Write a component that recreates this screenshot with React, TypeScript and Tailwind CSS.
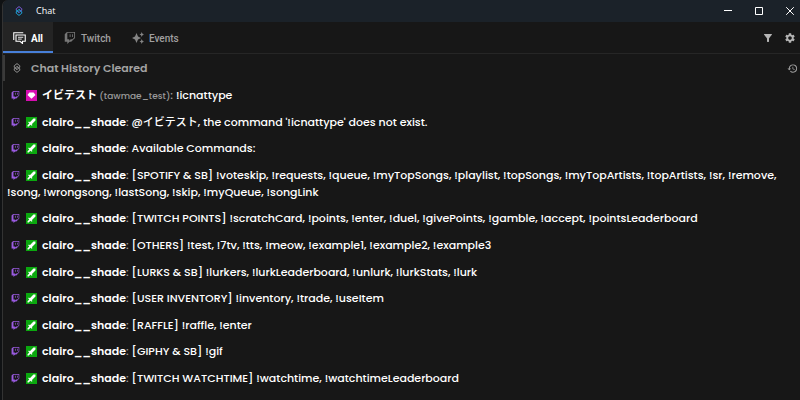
import type { ReactNode } from "react";
import { BsTwitch } from "react-icons/bs";
import { MdFilterAlt, MdHistory, MdSettings } from "react-icons/md";

type Message = {
  user: string;
  login?: string;
  badge: "sub" | "mod";
  text: string;
};

const messages: Message[] = [
  { user: "イビテスト", login: "tawmae_test", badge: "sub", text: "!icnattype" },
  { user: "clairo__shade", badge: "mod", text: "@イビテスト, the command '!icnattype' does not exist." },
  { user: "clairo__shade", badge: "mod", text: "Available Commands:" },
  {
    user: "clairo__shade",
    badge: "mod",
    text: "[SPOTIFY & SB] !voteskip, !requests, !queue, !myTopSongs, !playlist, !topSongs, !myTopArtists, !topArtists, !sr, !remove, !song, !wrongsong, !lastSong, !skip, !myQueue, !songLink",
  },
  {
    user: "clairo__shade",
    badge: "mod",
    text: "[TWITCH POINTS] !scratchCard, !points, !enter, !duel, !givePoints, !gamble, !accept, !pointsLeaderboard",
  },
  { user: "clairo__shade", badge: "mod", text: "[OTHERS] !test, !7tv, !tts, !meow, !example1, !example2, !example3" },
  { user: "clairo__shade", badge: "mod", text: "[LURKS & SB] !lurkers, !lurkLeaderboard, !unlurk, !lurkStats, !lurk" },
  { user: "clairo__shade", badge: "mod", text: "[USER INVENTORY] !inventory, !trade, !useItem" },
  { user: "clairo__shade", badge: "mod", text: "[RAFFLE] !raffle, !enter" },
  { user: "clairo__shade", badge: "mod", text: "[GIPHY & SB] !gif" },
  { user: "clairo__shade", badge: "mod", text: "[TWITCH WATCHTIME] !watchtime, !watchtimeLeaderboard" },
];

const Logo = ({ className, top, bottom }: { className: string; top: string; bottom: string }) => (
  <svg viewBox="0 0 16 20" className={className} fill="none" strokeWidth="2" strokeLinejoin="round" aria-hidden="true">
    <path d="M2.500 8.500V5.500L8 1.200l5.500 4.300v3L8 13 5 10.500" stroke={top} />
    <path d="M13.500 11.500v3L8 18.800l-5.500-4.300v-3L8 7l3 2.500" stroke={bottom} />
    <path d="M2.500 8.500L8 13M13.500 11.500L8 7" stroke={bottom} />
  </svg>
);

const ChatIcon = () => (
  <svg viewBox="0 0 26 24" className="h-3 w-[13px]" fill="none" stroke="currentColor" strokeWidth="2.2" aria-hidden="true">
    <path d="M1.500 16V1.500h19" />
    <path d="M6 6h18.500v12.500H19V23l-5-4.500H6z" />
    <path d="M10 10.500h10.500M10 14.200h7.500" strokeWidth="1.8" />
  </svg>
);

const SparklesIcon = () => (
  <svg viewBox="0 0 24 24" className="size-3 text-[#858585]" fill="currentColor" aria-hidden="true">
    <path d="M9 2l3 7 6 3-6 3-3 7-3-7-6-3 6-3z" />
    <path d="M19.500 0l1.500 3.500L24 5l-3 1.500L19.500 10 18 6.500 15 5l3-1.500z" />
    <path d="M19.500 14l1.500 3.500 3 1.500-3 1.500-1.500 3.500-1.500-3.500-3-1.500 3-1.500z" />
  </svg>
);

const Badge = ({ kind }: { kind: Message["badge"] }) =>
  kind === "sub" ? (
    <svg viewBox="0 0 18 18" className="mr-[5px] inline-block size-[11px] align-[-2px]" aria-hidden="true">
      <path d="M0 0h18v18H0z" fill="#d60db0" />
      <path d="M5.500 4h7l3 4L9 14.500 2.500 8z" fill="#fff" />
    </svg>
  ) : (
    <svg viewBox="0 0 18 18" className="mr-[5px] inline-block size-[11px] align-[-2px]" aria-hidden="true">
      <path d="M0 0h18v18H0z" fill="#0ba80f" />
      <path d="M15.500 2.500h-3.300L6.300 8.600 4.900 7.300 3.500 8.700l1.900 2-2.900 2.900v1.900h1.900l2.900-2.900 2 1.900 1.400-1.400-1.300-1.400 6.100-5.900z" fill="#fff" />
    </svg>
  );

const Tab = ({ icon, label, active }: { icon: ReactNode; label: string; active?: boolean }) => (
  <button
    type="button"
    role="tab"
    aria-selected={!!active}
    className={
      active
        ? "flex items-center gap-[5px] border-b-2 border-[#477fd9] bg-[#242424] px-2.5 pt-[3px] font-bold text-white"
        : "flex items-center gap-[5px] border-b-2 border-transparent px-2.5 pt-[3px] font-medium text-[#a0a0a0]"
    }
  >
    {icon}
    {label}
  </button>
);

const App = () => {
  return (
    <div className="flex min-h-screen bg-[#101214] font-['Poppins','Inter','Noto_Sans_CJK_JP',sans-serif] text-[11px] text-white">
      <div className="w-0.5 shrink-0"></div>

      <div className="flex min-w-0 flex-1 flex-col overflow-hidden rounded-tl-md border-l border-[#333333] bg-[#171717]">
        {/* Title bar */}
        <header className="flex h-[22px] items-center bg-[#1b2229] pr-1.5 pl-3">
          <Logo className="mr-[13px] h-2.5 w-2" top="#7c5bd6" bottom="#1fa3d8" />
          <h1 className="font-['Open_Sans',sans-serif] text-[9px]">Chat</h1>
          <div className="ml-auto flex items-center gap-[23px]">
            <button type="button" aria-label="Minimize">
              <svg viewBox="0 0 8 8" className="size-2" stroke="currentColor" aria-hidden="true">
                <path d="M0 3.500h8" />
              </svg>
            </button>
            <button type="button" aria-label="Maximize">
              <svg viewBox="0 0 8 8" className="size-2" fill="none" stroke="currentColor" aria-hidden="true">
                <path d="M.5.5h7v7h-7z" />
              </svg>
            </button>
            <button type="button" aria-label="Close">
              <svg viewBox="0 0 8 8" className="size-2" fill="none" stroke="currentColor" aria-hidden="true">
                <path d="M.2.2l7.600 7.600M7.800.2L.2 7.800" />
              </svg>
            </button>
          </div>
        </header>

        {/* Tabs */}
        <nav className="flex h-8 border-b border-[#262626]">
          <div role="tablist" className="flex gap-px font-['Roboto',sans-serif] text-[10px]">
            <Tab icon={<ChatIcon />} label="All" active />
            <Tab icon={<BsTwitch className="size-3 text-[#777777]" aria-hidden="true" />} label="Twitch" />
            <Tab icon={<SparklesIcon />} label="Events" />
          </div>
          <div className="ml-auto flex items-center gap-2.5 pr-1 text-[#b5b5b5]">
            <button type="button" aria-label="Filter">
              <MdFilterAlt className="size-3" />
            </button>
            <button type="button" aria-label="Settings">
              <MdSettings className="size-3" />
            </button>
          </div>
        </nav>

        <main className="flex flex-1 flex-col">
          <div className="mt-px flex h-[26px] items-center border-l-2 border-[#3a3a3a] pr-0.5 pl-2 text-[#a3a3a3]">
            <Logo className="mr-2.5 h-2.5 w-2" top="#8f8f8f" bottom="#8f8f8f" />
            <span className="font-semibold">Chat History Cleared</span>
            <button type="button" aria-label="History" className="ml-auto">
              <MdHistory className="size-[11px]" />
            </button>
          </div>

          {/* Messages */}
          <ul className="flex flex-1 flex-col justify-between pt-1.5 pr-2 pb-[13px] pl-1 leading-[17px] font-medium">
            {messages.map((message, index) => (
              <li key={index}>
                <BsTwitch className="mr-1.5 ml-1 inline-block size-[9px] align-[-1px] text-[#9a5be0]" aria-hidden="true" />
                <Badge kind={message.badge} />
                <b className="font-semibold">{message.user}</b>
                {message.login && <span className="text-[9px] leading-none text-[#9a9a9a]"> ({message.login})</span>}
                <span className="text-[#a3a3a3]">:</span> {message.text}
              </li>
            ))}
          </ul>
        </main>
      </div>
    </div>
  );
};

export default App;
